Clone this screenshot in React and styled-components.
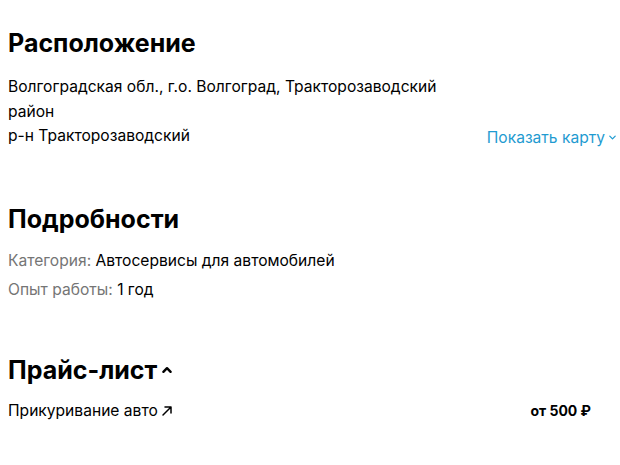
import React from "react";
import styled, { createGlobalStyle } from "styled-components";

const GlobalStyle = createGlobalStyle`
  body {
    margin: 0;
    background: #fff;
    font-family: Inter, "Noto Sans", sans-serif;
    color: #000;
  }
`;

const Page = styled.div`
  padding: 28px 3px 0 8px;
  display: flex;
  flex-direction: column;
`;

const Section = styled.section`
  margin-bottom: ${(p) => p.gap || 0}px;
`;

const Title = styled.h2`
  margin: 0 0 ${(p) => p.after || 14}px;
  font-size: 25px;
  font-weight: 700;
  line-height: 30px;
  display: flex;
  align-items: center;
  gap: 4px;
`;

const LocationRow = styled.div`
  display: flex;
  justify-content: space-between;
  align-items: flex-end;
`;

const Address = styled.div`
  width: 450px;
  font-size: 15.6px;
  line-height: 24.5px;
`;

const MapLink = styled.a`
  display: flex;
  align-items: center;
  gap: 3px;
  color: #1f9bd1;
  font-size: 15.6px;
  line-height: 22px;
  text-decoration: none;
  cursor: pointer;
`;

const Param = styled.div`
  font-size: 15.6px;
  line-height: 29px;
`;

const Label = styled.span`
  color: #757575;
`;

const PriceRow = styled.div`
  display: flex;
  justify-content: space-between;
  align-items: center;
  width: 583px;
  font-size: 15.6px;
  line-height: 24px;
`;

const Service = styled.span`
  display: flex;
  align-items: center;
  gap: 2px;
`;

const Price = styled.span`
  font-weight: 700;
  font-size: 14px;
`;

const Chevron = ({ up, size = 10, stroke = 1.6 }) => (
  <svg width={size} height={size} viewBox="0 0 10 10" fill="none">
    <path
      d={up ? "M2 6.5 L5 3.5 L8 6.5" : "M2 3.5 L5 6.5 L8 3.5"}
      stroke="currentColor"
      strokeWidth={stroke}
      strokeLinecap="round"
      strokeLinejoin="round"
    />
  </svg>
);

const Arrow = () => (
  <svg width="14" height="14" viewBox="0 0 14 14" fill="none">
    <path
      d="M3 11 L11 3 M5 3 H11 V9"
      stroke="currentColor"
      strokeWidth="1.5"
      strokeLinecap="round"
      strokeLinejoin="round"
    />
  </svg>
);

export default function App() {
  return (
    <>
      <GlobalStyle />
      <Page>
        <Section gap={55}>
          <Title after={17}>Расположение</Title>
          <LocationRow>
            <Address>
              Волгоградская обл., г.о. Волгоград, Тракторозаводский район
              <br />
              р-н Тракторозаводский
            </Address>
            <MapLink>
              Показать карту <Chevron size={9} stroke={1.4} />
            </MapLink>
          </LocationRow>
        </Section>
        <Section gap={51}>
          <Title after={12}>Подробности</Title>
          <Param>
            <Label>Категория: </Label>Автосервисы для автомобилей
          </Param>
          <Param>
            <Label>Опыт работы: </Label>1 год
          </Param>
        </Section>
        <Section>
          <Title after={14}>
            Прайс-лист <Chevron up size={12} stroke={2} />
          </Title>
          <PriceRow>
            <Service>
              Прикуривание авто <Arrow />
            </Service>
            <Price>от 500 ₽</Price>
          </PriceRow>
        </Section>
      </Page>
    </>
  );
}
